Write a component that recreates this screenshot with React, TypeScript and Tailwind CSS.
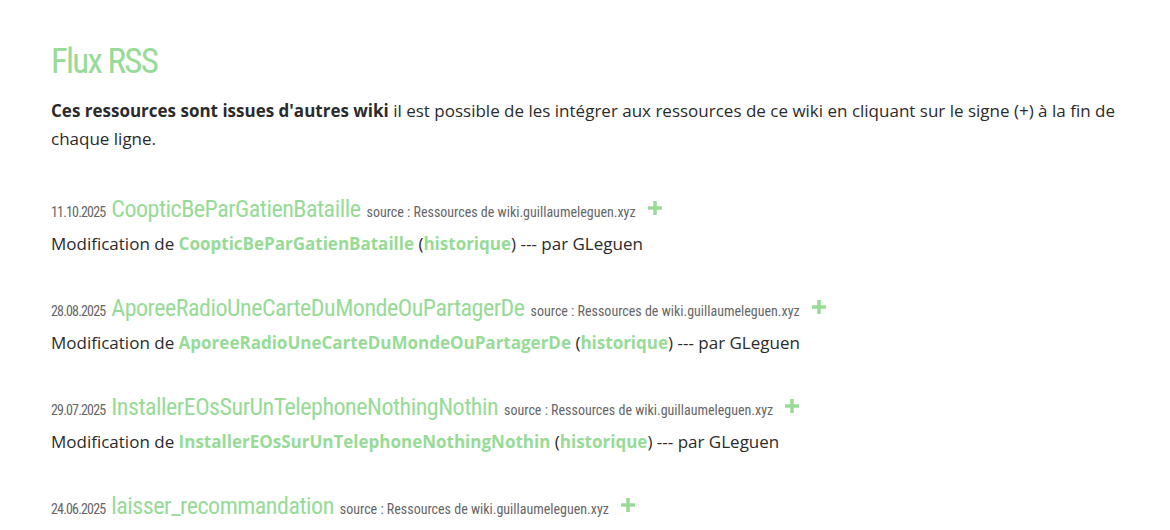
import React from "react";

const items = [
  { date: "11.10.2025", title: "CoopticBeParGatienBataille" },
  { date: "28.08.2025", title: "AporeeRadioUneCarteDuMondeOuPartagerDe" },
  { date: "29.07.2025", title: "InstallerEOsSurUnTelephoneNothingNothin" },
  { date: "24.06.2025", title: "laisser_recommandation" },
];

const cond = "font-['Roboto_Condensed','DejaVu_Sans',sans-serif] font-stretch-condensed";

function Plus() {
  return (
    <svg width="16" height="16" viewBox="0 0 16 16" className="block">
      <path d="M8 1v14M1 8h14" stroke="#97db97" strokeWidth="3.5" />
    </svg>
  );
}

function Entry({ date, title }: { date: string; title: string }) {
  return (
    <div>
      <div className="flex items-baseline gap-[6px] h-[34px]">
        <span className={`${cond} text-[14px] tracking-[-0.06em] text-[#666]`}>{date}</span>
        <a className={`${cond} text-[24px] tracking-[-0.02em] text-[#97db97]`}>{title}</a>
        <span className={`${cond} text-[14px] text-[#666]`}>
          source : Ressources de wiki.guillaumeleguen.xyz
        </span>
        <span className="ml-[5px] self-center">
          <Plus />
        </span>
      </div>
      <p className="mt-[3px] text-[17px] leading-[32px] text-[#2b2b2b]">
        Modification de{" "}
        <a className="font-bold text-[#97db97]">{title}</a> (
        <a className="font-bold text-[#97db97]">historique</a>) --- par GLeguen
      </p>
    </div>
  );
}

export default function App() {
  return (
    <div className="bg-white min-h-[530px] pl-[51px] pr-[40px] pt-[40px] font-['Open_Sans','Noto_Sans',sans-serif]">
      <h1 className={`${cond} text-[35px] tracking-[-0.05em] leading-[44px] text-[#97db97]`}>Flux RSS</h1>
      <p className="mt-[13px] text-[17px] leading-[28px] text-[#2b2b2b]">
        <strong>Ces ressources sont issues d'autres wiki</strong> il est possible de les intégrer aux
        ressources de ce wiki en cliquant sur le signe (+) à la fin de chaque ligne.
      </p>
      <div className="pt-[38px] flex flex-col gap-[30px]">
        {items.map((it) => (
          <Entry key={it.date} {...it} />
        ))}
      </div>
    </div>
  );
}
